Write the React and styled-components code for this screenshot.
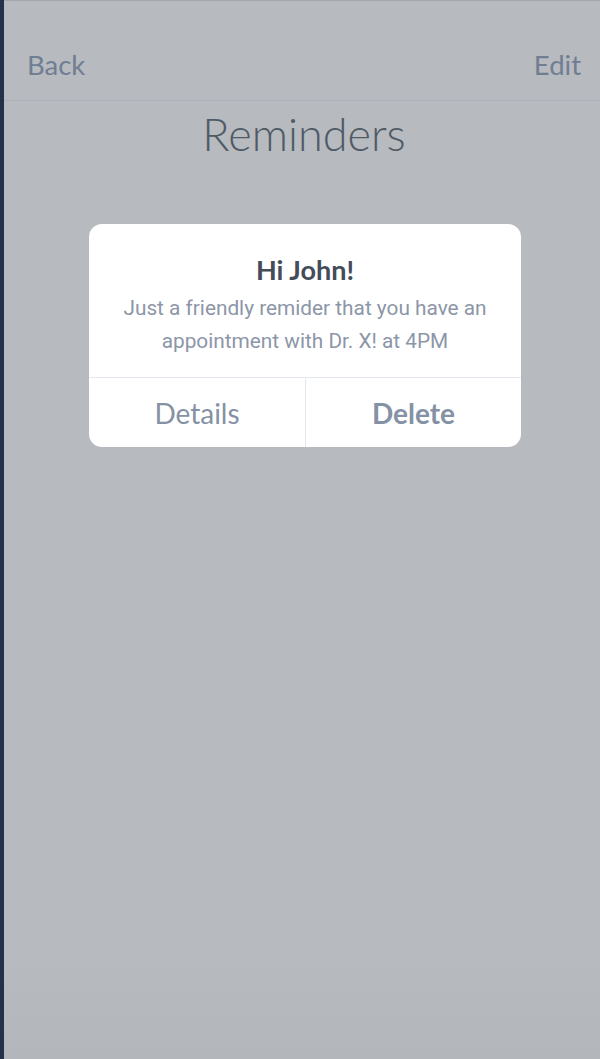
import React from "react";
import styled, { createGlobalStyle } from "styled-components";

const Global = createGlobalStyle`
  html, body { margin: 0; padding: 0; }
  body { background: #b7babe; }
`;

const Page = styled.div`
  display: flex;
  width: 600px;
  height: 1059px;
  overflow: hidden;
`;

const Strip = styled.div`
  width: 4px;
  flex: 0 0 4px;
  background: #243247;
`;

const Main = styled.div`
  flex: 1;
  display: flex;
  flex-direction: column;
  background: linear-gradient(#b7babe, #b7babe 90%, #b3b6ba);
  border-top: 1px solid #a3a6ab;
`;

const Header = styled.div`
  display: flex;
  align-items: center;
  justify-content: space-between;
  padding: 0 19px 0 23px;
  border-bottom: 1px solid #a9b1bc;
  box-sizing: border-box;
  height: 100px;
`;

const NavButton = styled.span`
  font-family: Lato, "Open Sans", sans-serif;
  font-size: 27.5px;
  color: #6f7e93;
  padding-top: 28px;
`;

const Title = styled.h1`
  margin: 0;
  text-align: center;
  font-family: Lato, sans-serif;
  font-weight: 300;
  font-size: 45px;
  color: #505a66;
  line-height: 1;
  padding-top: 11px;
  padding-left: 4px;
`;

const Dialog = styled.div`
  margin: 67px 0 0 85px;
  width: 432px;
  background: #fff;
  border-radius: 13px;
  overflow: hidden;
`;

const Body = styled.div`
  padding: 30px 16px 19px;
  text-align: center;
  border-bottom: 1px solid #e3e7ee;
`;

const DialogTitle = styled.div`
  font-family: Lato, sans-serif;
  font-weight: 700;
  font-size: 27px;
  color: #434c58;
  line-height: 32px;
  margin-bottom: 6px;
`;

const Message = styled.div`
  font-family: Roboto, sans-serif;
  font-size: 20.8px;
  line-height: 33px;
  color: #8c96a8;
`;

const Actions = styled.div`
  display: grid;
  grid-template-columns: 1fr 1fr;
  height: 69px;
`;

const Action = styled.div`
  display: flex;
  align-items: center;
  justify-content: center;
  font-family: Lato, sans-serif;
  font-size: 28px;
  color: #8591a5;
  font-weight: ${(p) => (p.$bold ? 700 : 400)};
  border-left: ${(p) => (p.$divider ? "1px solid #e3e7ee" : "none")};
`;

export default function App() {
  return (
    <>
      <Global />
      <Page>
        <Strip />
        <Main>
          <Header>
            <NavButton>Back</NavButton>
            <NavButton>Edit</NavButton>
          </Header>
          <Title>Reminders</Title>
          <Dialog>
            <Body>
              <DialogTitle>Hi John!</DialogTitle>
              <Message>
                Just a friendly remider that you have an
                <br />
                appointment with Dr. X! at 4PM
              </Message>
            </Body>
            <Actions>
              <Action>Details</Action>
              <Action $bold $divider>
                Delete
              </Action>
            </Actions>
          </Dialog>
        </Main>
      </Page>
    </>
  );
}
